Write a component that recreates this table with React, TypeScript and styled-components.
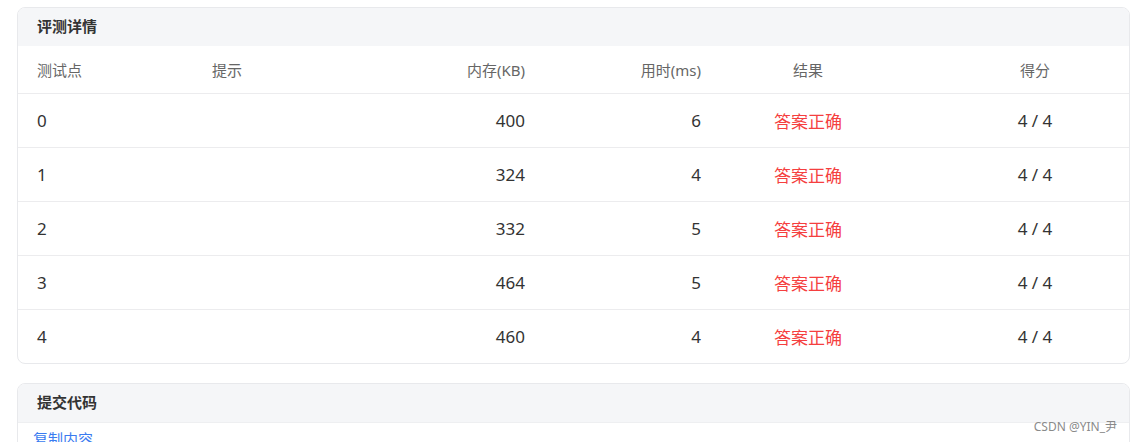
import React from 'react';
import styled, { createGlobalStyle } from 'styled-components';

const GlobalStyle = createGlobalStyle`
  body {
    margin: 0;
    background: #ffffff;
    font-family: "Noto Sans", "Noto Sans CJK SC", sans-serif;
  }
`;

const Page = styled.div`
  position: relative;
  width: 1132px;
  height: 442px;
  overflow: hidden;
  padding: 7px 2px 0 17px;
  box-sizing: border-box;
  display: flex;
  flex-direction: column;
  gap: 19px;
`;

const Card = styled.div`
  border: 1px solid #e8e9ec;
  border-radius: 8px;
  overflow: hidden;
  background: #ffffff;
  flex-shrink: 0;
`;

const CardHeader = styled.div<{ $line?: boolean }>`
  height: 34px;
  padding: 0 0 4px 19px;
  background: #f5f6f8;
  display: flex;
  align-items: center;
  font-size: 15px;
  font-weight: 600;
  color: #333333;
  border-bottom: ${(p) => (p.$line ? '1px solid #eeeff1' : 'none')};
`;

const Row = styled.div<{ $head?: boolean }>`
  display: grid;
  grid-template-columns: 175px 176px 176px 176px 174px 1fr;
  height: ${(p) => (p.$head ? 47 : 53)}px;
  align-items: center;
  border-top: ${(p) => (p.$head ? 'none' : '1px solid #ececee')};
  font-size: ${(p) => (p.$head ? 15 : 17)}px;
  color: ${(p) => (p.$head ? '#666666' : '#333333')};
`;

const Cell = styled.div<{ $align?: 'left' | 'right' | 'center'; $red?: boolean; $pl?: number }>`
  text-align: ${(p) => p.$align || 'left'};
  padding: 0 20px 0 ${(p) => (p.$pl !== undefined ? p.$pl : 19)}px;
  color: ${(p) => (p.$red ? '#f53f3f' : 'inherit')};
  white-space: nowrap;
`;

const CodeBody = styled.div`
  padding: 5px 15px;
`;

const CopyLink = styled.a`
  color: #3a7bf0;
  font-size: 15px;
  text-decoration: none;
`;

const Watermark = styled.div`
  position: absolute;
  right: 15px;
  top: 417px;
  font-size: 12px;
  color: #8a8a8a;
`;

const rows = [
  { id: 0, mem: 400, time: 6 },
  { id: 1, mem: 324, time: 4 },
  { id: 2, mem: 332, time: 5 },
  { id: 3, mem: 464, time: 5 },
  { id: 4, mem: 460, time: 4 },
];

export default function App() {
  return (
    <>
      <GlobalStyle />
      <Page>
        <Card>
          <CardHeader>评测详情</CardHeader>
          <Row $head>
            <Cell>测试点</Cell>
            <Cell>提示</Cell>
            <Cell $align="right">内存(KB)</Cell>
            <Cell $align="right">用时(ms)</Cell>
            <Cell $align="center" $pl={20}>结果</Cell>
            <Cell $align="center" $pl={66}>得分</Cell>
          </Row>
          {rows.map((r) => (
            <Row key={r.id}>
              <Cell>{r.id}</Cell>
              <Cell />
              <Cell $align="right">{r.mem}</Cell>
              <Cell $align="right">{r.time}</Cell>
              <Cell $align="center" $pl={20} $red>答案正确</Cell>
              <Cell $align="center" $pl={66}>4 / 4</Cell>
            </Row>
          ))}
        </Card>
        <Card>
          <CardHeader $line>提交代码</CardHeader>
          <CodeBody>
            <CopyLink href="#">复制内容</CopyLink>
          </CodeBody>
        </Card>
        <Watermark>CSDN @YIN_尹</Watermark>
      </Page>
    </>
  );
}
